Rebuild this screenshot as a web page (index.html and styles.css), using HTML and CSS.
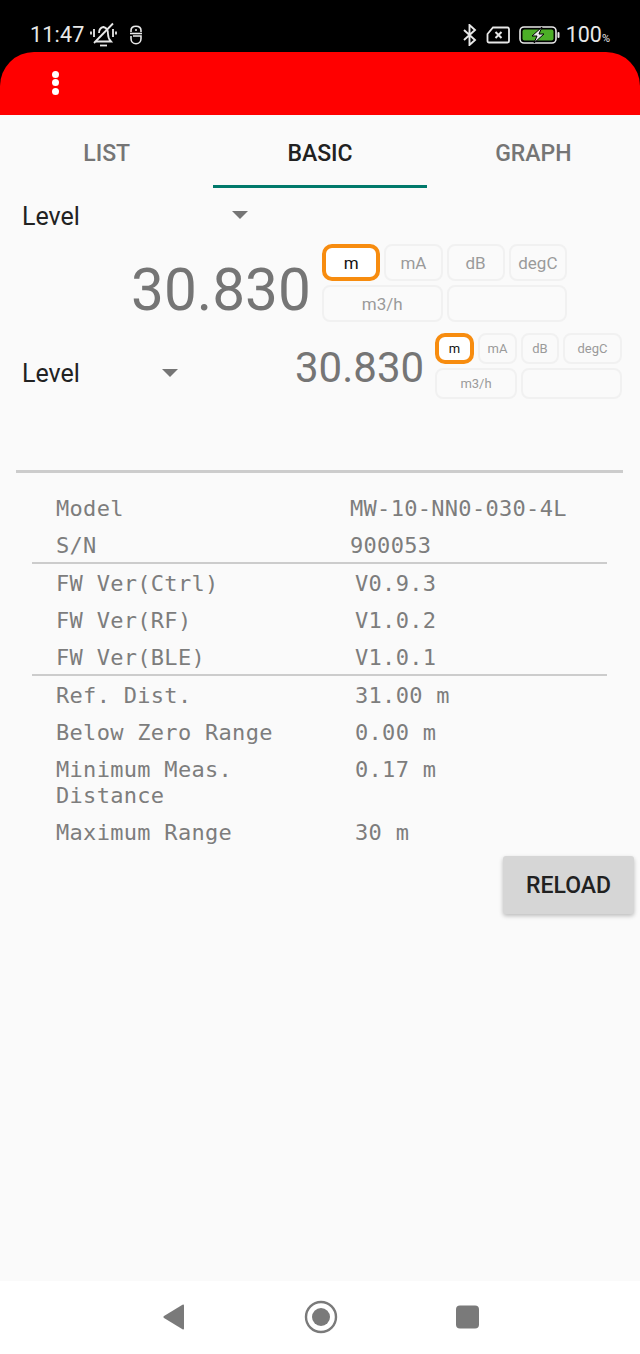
FILE: index.html
```html
<!DOCTYPE html>
<html lang="en">

<head>
  <meta charset="UTF-8" />
  <meta name="viewport" content="width=device-width, initial-scale=1.0" />
  <title>Level meter - Basic</title>
  <link rel="stylesheet" href="styles.css">
</head>

<body>
  <div class="phone">
    <div class="status-bar">
      <span class="clock">11:47</span>
      <svg class="icon-bell" width="27" height="25" viewBox="0 0 27 25" fill="none" stroke="#e8e8e8" stroke-width="1.8">
        <path d="M6 19.500h15c-2-2-3-4-3-7.500 0-4-2-6.500-4.500-7-2.500.5-4.500 2.500-4.500 6" />
        <path d="M10 23.500h7" />
        <path d="M23 1.500 4 21" />
        <path d="M4 7v8M1 9.500v3M23 7v8M26 9.500v3" />
      </svg>
      <svg class="icon-mouse" width="14" height="20" viewBox="0 0 14 20" fill="none" stroke="#e8e8e8" stroke-width="1.600">
        <path d="M2 7V5.500C2 3 4 1.200 7 1.200S12 3 12 5.500V7" />
        <path d="M1 8.500h12" />
        <path d="M2 11v2.500C2 16.500 4 18.800 7 18.800S12 16.500 12 13.500V11H4" />
        <circle cx="7" cy="5" r="1" fill="#e8e8e8" stroke="none" />
      </svg>
      <span class="status-space"></span>
      <svg class="icon-bt" width="14" height="22" viewBox="0 0 14 22" fill="none" stroke="#e8e8e8" stroke-width="1.900">
        <path d="M1 6l11 10-5.500 5V1L12 6 1 16" />
      </svg>
      <svg class="icon-sim" width="24" height="18" viewBox="0 0 24 18" fill="none" stroke="#e8e8e8" stroke-width="1.800">
        <path d="M7 1.500h14.500a1.500 1.500 0 0 1 1.500 1.500v12a1.500 1.500 0 0 1-1.500 1.500H3a1.500 1.500 0 0 1-1.500-1.500V8z" />
        <path d="M9.500 6l6 6M15.500 6l-6 6" stroke-width="2" />
      </svg>
      <svg class="icon-battery" width="41" height="18" viewBox="0 0 41 18">
        <rect x="1" y="1" width="36" height="16" rx="4" fill="none" stroke="#e8e8e8" stroke-width="1.600" />
        <rect x="3.500" y="3.500" width="31" height="11" rx="2" fill="#4caf27" />
        <rect x="38.500" y="6" width="2" height="6" rx="1" fill="#e8e8e8" />
        <path d="M23 1 13 10h5l-3 7 10-9h-5l3-7z" fill="#e8e8e8" stroke="#000" stroke-width="1" />
      </svg>
      <span class="battery-text">100<small>%</small></span>
    </div>

    <div class="app-bar">
      <div class="menu-dots"><i></i><i></i><i></i></div>
    </div>

    <div class="tabs">
      <div class="tab">List</div>
      <div class="tab active">Basic</div>
      <div class="tab">Graph</div>
    </div>

    <div class="content">
      <div class="spinner spinner-top">
        <span class="spinner-text">Level</span>
        <span class="caret"></span>
      </div>

      <div class="meter-big">
        <div class="value-big">30.830</div>
        <div class="units units-big">
          <div class="unit selected">m</div>
          <div class="unit">mA</div>
          <div class="unit">dB</div>
          <div class="unit">degC</div>
          <div class="unit wide">m3/h</div>
          <div class="unit wide"></div>
        </div>
      </div>

      <div class="meter-small">
        <div class="spinner spinner-low">
          <span class="spinner-text">Level</span>
          <span class="caret"></span>
        </div>
        <div class="value-small">30.830</div>
        <div class="units units-small">
          <div class="unit selected">m</div>
          <div class="unit">mA</div>
          <div class="unit">dB</div>
          <div class="unit">degC</div>
          <div class="unit wide">m3/h</div>
          <div class="unit wide"></div>
        </div>
      </div>

      <div class="divider"></div>

      <div class="info">
        <div class="info-row"><span class="key">Model</span><span class="val">MW-10-NN0-030-4L</span></div>
        <div class="info-row"><span class="key">S/N</span><span class="val">900053</span></div>
        <div class="info-line"></div>
        <div class="info-row"><span class="key">FW Ver(Ctrl)</span><span class="val shift">V0.9.3</span></div>
        <div class="info-row"><span class="key">FW Ver(RF)</span><span class="val shift">V1.0.2</span></div>
        <div class="info-row"><span class="key">FW Ver(BLE)</span><span class="val shift">V1.0.1</span></div>
        <div class="info-line"></div>
        <div class="info-row"><span class="key">Ref. Dist.</span><span class="val shift">31.00 m</span></div>
        <div class="info-row"><span class="key">Below Zero Range</span><span class="val shift">0.00 m</span></div>
        <div class="info-row"><span class="key">Minimum Meas. Distance</span><span class="val shift">0.17 m</span></div>
        <div class="info-row"><span class="key">Maximum Range</span><span class="val shift">30 m</span></div>
      </div>

      <div class="reload-row">
        <button class="reload-btn">Reload</button>
      </div>
    </div>

    <div class="nav-bar">
      <svg width="24" height="28" viewBox="0 0 24 28"><path d="M22 2.500v23a1 1 0 0 1-1.500.8L2 15a1.200 1.200 0 0 1 0-2L20.500 1.700a1 1 0 0 1 1.500.8z" fill="#7a7a7a" /></svg>
      <svg width="34" height="34" viewBox="0 0 34 34"><circle cx="17" cy="17" r="15" fill="none" stroke="#7a7a7a" stroke-width="2.400" /><circle cx="17" cy="17" r="9" fill="#7a7a7a" /></svg>
      <svg width="23" height="24" viewBox="0 0 23 24"><rect width="23" height="23" y="0.500" rx="4" fill="#7a7a7a" /></svg>
    </div>
  </div>
</body>

</html>
```

FILE: styles.css
```css
* {
  box-sizing: border-box;
}

body {
  margin: 0;
  background-color: #000;
  font-family: Roboto, sans-serif;
}

.phone {
  display: flex;
  flex-direction: column;
  width: 640px;
  height: 1354px;
  overflow: hidden;
}

/* status bar */
.status-bar {
  display: flex;
  flex: none;
  align-items: center;
  height: 52px;
  padding: 17px 30px 0 30px;
  background-color: #000;
  color: #e8e8e8;
}

.clock {
  font-size: 21.500px;
  letter-spacing: 0.2px;
}

.icon-bell {
  margin-left: 5px;
}

.icon-mouse {
  margin-left: 12px;
}

.status-space {
  flex: 1;
}

.icon-sim {
  margin-left: 9px;
}

.icon-battery {
  margin-left: 9px;
}

.battery-text {
  margin-left: 6px;
  font-size: 21.500px;
}

.battery-text small {
  font-size: 11px;
}

/* app bar */
.app-bar {
  display: flex;
  flex: none;
  align-items: center;
  height: 62.500px;
  padding: 0 0 0 52px;
  border-radius: 34px 34px 0 0;
  background-color: #ff0000;
}

.menu-dots {
  display: flex;
  flex-direction: column;
  gap: 1.500px;
  margin-bottom: 1px;
}

.menu-dots i {
  display: block;
  width: 7px;
  height: 7px;
  border-radius: 50%;
  background-color: #fff;
}

/* tabs */
.tabs {
  display: flex;
  flex: none;
  height: 73.500px;
  background-color: #fafafa;
}

.tab {
  flex: 1;
  height: 73.500px;
  border-bottom: 3px solid transparent;
  font-size: 23px;
  font-weight: 500;
  line-height: 78px;
  text-align: center;
  text-transform: uppercase;
  color: #757575;
}

.tab.active {
  border-bottom-color: #00796b;
  color: #212121;
}

/* main area */
.content {
  flex: 1;
  background-color: #fafafa;
}

.spinner {
  display: flex;
  align-items: center;
}

.spinner-text {
  font-size: 25px;
  color: #222;
}

.caret {
  width: 0;
  height: 0;
  border-left: 8px solid transparent;
  border-right: 8px solid transparent;
  border-top: 8px solid #757575;
}

.spinner-top {
  height: 56px;
  padding-left: 22px;
}

.spinner-top .caret {
  margin-left: 152px;
  margin-bottom: 2px;
}

.meter-big {
  display: flex;
  align-items: flex-start;
  height: 89px;
  padding-left: 131px;
}

.value-big {
  width: 180px;
  font-size: 58.500px;
  line-height: 92px;
  color: #757575;
}

.units {
  display: grid;
}

.units-big {
  grid-template-columns: repeat(4, 58.250px);
  grid-auto-rows: 37px;
  gap: 4px;
  margin-left: 11px;
  font-size: 17px;
}

.units-small {
  grid-template-columns: 39px 39px 38px 59px;
  grid-auto-rows: 31px;
  gap: 4px;
  font-size: 13px;
}

.unit {
  display: flex;
  align-items: center;
  justify-content: center;
  border: 2px solid #f1f1f1;
  border-radius: 8px;
  color: #9a9a9a;
}

.unit.selected {
  border: 4px solid #f78c0f;
  border-radius: 10px;
  background-color: #fff;
  color: #111;
}

.unit.wide {
  grid-column: span 2;
}

.meter-small {
  display: flex;
  align-items: flex-start;
  height: 137px;
  padding-left: 22px;
}

.spinner-low {
  width: 273px;
  height: 80px;
}

.spinner-low .caret {
  margin-left: 82px;
}

.value-small {
  width: 140px;
  font-size: 42px;
  line-height: 70px;
  color: #757575;
}

.divider {
  height: 3px;
  margin: 0 17px 0 16px;
  background-color: #cccccc;
}

/* device info table */
.info {
  padding: 15px 33px 0 32px;
  font-family: "DejaVu Sans Mono", monospace;
  font-size: 22px;
  letter-spacing: 0.3px;
  color: #7d7d7d;
}

.info-row {
  display: flex;
  padding: 8px 0 3px 24px;
  line-height: 26px;
}

.key {
  flex: none;
  width: 294px;
  padding-right: 60px;
}

.val.shift {
  margin-left: 5px;
}

.info-line {
  height: 2px;
  margin-bottom: -1px;
  background-color: #cccccc;
}

.reload-row {
  display: flex;
  justify-content: flex-end;
  padding: 7px 6px 0 0;
}

.reload-btn {
  width: 131px;
  height: 58px;
  border: none;
  border-radius: 3px;
  background-color: #d6d6d6;
  box-shadow: 0 2px 4px rgba(0, 0, 0, 0.25);
  font-family: Roboto, sans-serif;
  font-size: 23px;
  font-weight: 500;
  text-transform: uppercase;
  color: #212121;
}

/* nav bar */
.nav-bar {
  display: flex;
  flex: none;
  align-items: center;
  justify-content: center;
  gap: 118px;
  height: 73px;
  padding-bottom: 1px;
  background-color: #fff;
}
```
